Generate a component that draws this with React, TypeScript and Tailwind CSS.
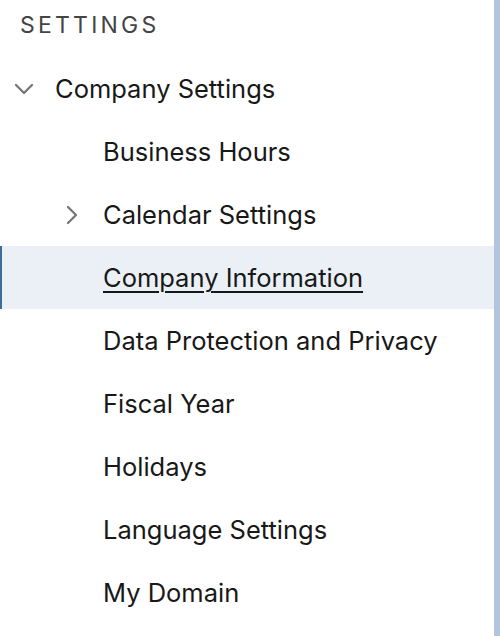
import React from "react";

const items = [
  { label: "Business Hours" },
  { label: "Calendar Settings", chevron: true },
  { label: "Company Information", active: true },
  { label: "Data Protection and Privacy" },
  { label: "Fiscal Year" },
  { label: "Holidays" },
  { label: "Language Settings" },
  { label: "My Domain" },
];

export default function App() {
  return (
    <div
      className="flex h-[636px] w-[500px] bg-white overflow-hidden text-[#181818]"
      style={{ fontFamily: "Inter, 'Noto Sans', sans-serif" }}
    >
      <div className="flex-1 flex flex-col">
        <div className="h-[57px] pl-[20px] pt-[10px] text-[23px] tracking-[0.14em] text-[#444444] leading-[30px]">
          SETTINGS
        </div>
        <div className="h-[63px] flex items-center">
          <div className="w-[55px] flex items-center pl-[14px]">
            <svg width="20" height="12" viewBox="0 0 20 12" fill="none">
              <path d="M2 2 L10 10 L18 2" stroke="#747474" strokeWidth="2.2" strokeLinecap="round" strokeLinejoin="round" />
            </svg>
          </div>
          <span className="text-[25.5px] pt-[2px]">Company Settings</span>
        </div>
        {items.map((it) => (
          <div
            key={it.label}
            className={
              "h-[63px] flex items-center border-l-2 " +
              (it.active ? "bg-[#eaf0f5] border-[#3e6e9c]" : "border-transparent")
            }
          >
            <div className="w-[101px] flex items-center pl-[64px]">
              {it.chevron && (
                <svg width="12" height="20" viewBox="0 0 12 20" fill="none">
                  <path d="M2 2 L10 10 L2 18" stroke="#747474" strokeWidth="2.2" strokeLinecap="round" strokeLinejoin="round" />
                </svg>
              )}
            </div>
            <span className={"text-[25.5px] pt-[2px] " + (it.active ? "underline underline-offset-[4px] decoration-[1.5px]" : "")}>
              {it.label}
            </span>
          </div>
        ))}
      </div>
      <div className="w-[6px] bg-[#b3c5de]" />
    </div>
  );
}
